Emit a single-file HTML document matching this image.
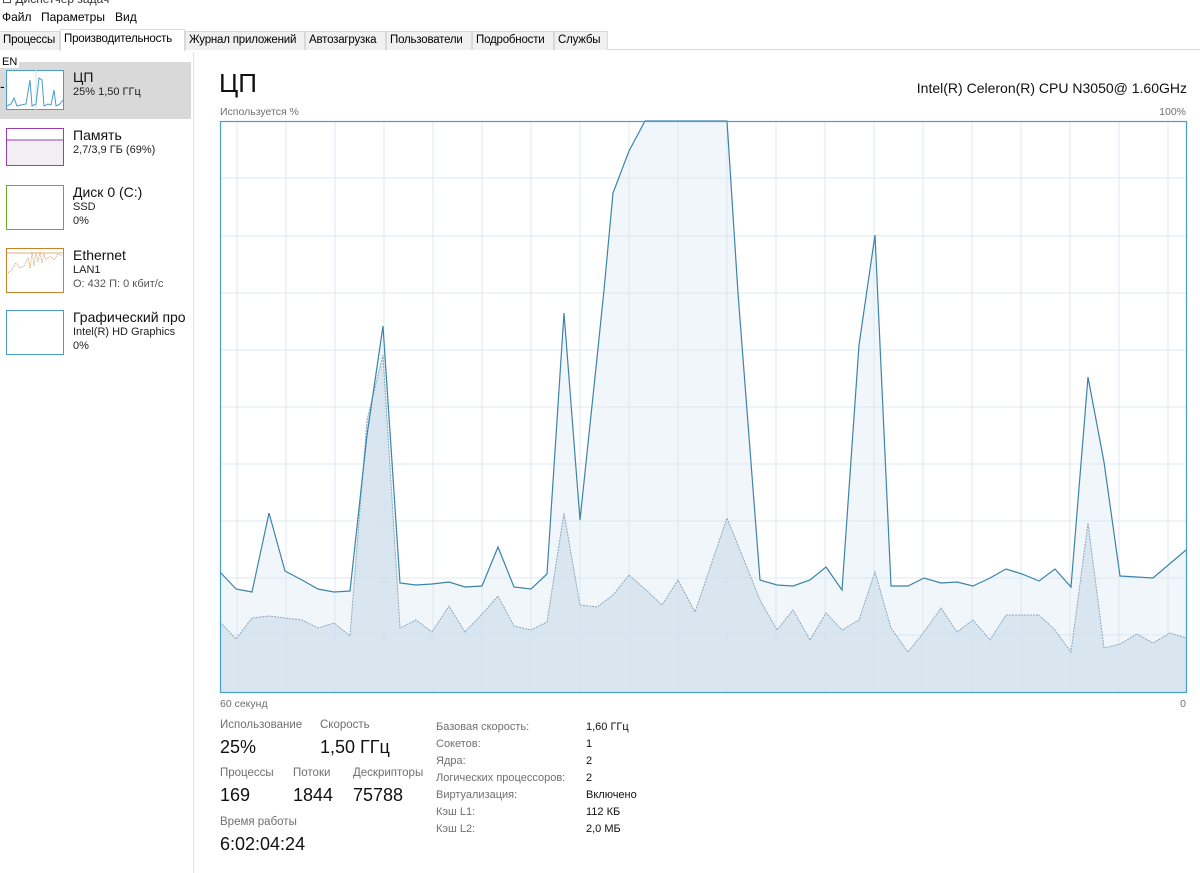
<!DOCTYPE html>
<html><head><meta charset="utf-8">
<style>
*{margin:0;padding:0;box-sizing:border-box}
body{width:1200px;height:873px;overflow:hidden;background:#fff;font-family:"Liberation Sans","Noto Sans CJK SC",sans-serif;color:#000;position:relative}
.a{position:absolute;white-space:nowrap}
.menu{font-size:12px;top:10px}
.tabs{position:absolute;top:29px;left:0;height:21px;width:1200px;border-bottom:1px solid #d9d9d9}
.tab{position:absolute;top:2px;height:19px;font-size:11.5px;letter-spacing:-0.2px;padding:2px 3px 0;border:1px solid #d9d9d9;border-bottom:none;background:#f0f0f0;white-space:nowrap;overflow:hidden}
.tab.sel{top:0;height:22px;background:#fff;padding-top:3px}
.side .t1{font-size:14px;color:#111}
.side .t2{font-size:11px;color:#222}
.lbl{font-size:11px;color:#707070}
.big{font-size:18px;color:#111}
.kv{font-size:11px;color:#707070}
.vv{font-size:11px;color:#111}
</style></head><body>
<div class="a" style="top:-8px;left:2px;font-size:12px;color:#333">⊟ Диспетчер задач</div>
<div class="a menu" style="left:2px">Файл</div>
<div class="a menu" style="left:41px">Параметры</div>
<div class="a menu" style="left:115px">Вид</div>
<div class="tabs">
<div class="tab" style="left:-1px;width:61px">Процессы</div>
<div class="tab sel" style="left:60px;width:125px">Производительность</div>
<div class="tab" style="left:185px;width:120px">Журнал приложений</div>
<div class="tab" style="left:305px;width:81px">Автозагрузка</div>
<div class="tab" style="left:386px;width:86px">Пользователи</div>
<div class="tab" style="left:472px;width:82px">Подробности</div>
<div class="tab" style="left:554px;width:54px">Службы</div>
</div>
<div class="a" style="left:193px;top:52px;width:1px;height:821px;background:#e3e3e3"></div>
<!-- sidebar -->
<div class="a" style="left:0;top:62px;width:191px;height:57px;background:#d9d9d9"></div>
<div class="a" style="left:0;top:56px;font-size:11px;background:#fff;padding:0 2px">EN</div>
<div class="a" style="left:0;top:78px;font-size:14px">-</div>
<svg class="a" style="left:6px;top:70px" width="58" height="40"><rect x="0.5" y="0.5" width="57" height="39" fill="#fff" stroke="#4a9cc9"/><line x1="30" y1="0" x2="30" y2="40" stroke="#cfe3ef"/><polyline fill="none" stroke="#4a9cc9" stroke-width="1" points="1,36 5,34 8,28 11,36 15,35 20,34 24,10 26,36 30,34 33,8 36,10 38,36 42,34 45,35 48,20 50,36 54,34 57,30"/></svg>
<div class="a side" style="left:73px;top:69px"><div class="t1">ЦП</div><div class="t2" style="margin-top:1px">25% 1,50 ГГц</div></div>

<svg class="a" style="left:6px;top:128px" width="58" height="38"><rect x="0.5" y="0.5" width="57" height="37" fill="#fff" stroke="#9b3eb3"/><rect x="1" y="12" width="56" height="25" fill="#f1eff3"/><line x1="1" y1="12" x2="57" y2="12" stroke="#9b3eb3"/></svg>
<div class="a side" style="left:73px;top:127px"><div class="t1">Память</div><div class="t2" style="margin-top:1px">2,7/3,9 ГБ (69%)</div></div>

<svg class="a" style="left:6px;top:185px" width="58" height="45"><rect x="0.5" y="0.5" width="57" height="44" fill="#fff" stroke="#6aad2c"/></svg>
<div class="a side" style="left:73px;top:184px"><div class="t1">Диск 0 (C:)</div><div class="t2" style="margin-top:1px">SSD</div><div class="t2" style="margin-top:2px">0%</div></div>

<svg class="a" style="left:6px;top:248px" width="58" height="45"><rect x="0.5" y="0.5" width="57" height="44" fill="#fff" stroke="#c8822c"/><line x1="1" y1="5" x2="57" y2="5" stroke="#e0b07a"/><polyline fill="none" stroke="#d09050" stroke-width="0.8" stroke-dasharray="1,1" points="2,25 6,22 10,15 14,20 18,18 22,10 24,20 26,4 28,18 30,4 32,14 34,4 36,15 38,6 40,12 44,8 48,12 52,6 56,8"/></svg>
<div class="a side" style="left:73px;top:247px"><div class="t1">Ethernet</div><div class="t2" style="margin-top:1px">LAN1</div><div class="t2" style="margin-top:2px;color:#555">О: 432 П: 0 кбит/с</div></div>

<svg class="a" style="left:6px;top:310px" width="58" height="45"><rect x="0.5" y="0.5" width="57" height="44" fill="#fff" stroke="#4a9cc9"/></svg>
<div class="a side" style="left:73px;top:309px"><div class="t1">Графический про</div><div class="t2" style="margin-top:1px">Intel(R) HD Graphics</div><div class="t2" style="margin-top:2px">0%</div></div>

<!-- main -->
<div class="a" style="left:219px;top:68px;font-size:26px;color:#111">ЦП</div>
<div class="a" style="right:13px;top:80px;font-size:14px;color:#111">Intel(R) Celeron(R) CPU N3050@ 1.60GHz</div>
<div class="a lbl" style="left:220px;top:106px;font-size:10.5px">Используется %</div>
<div class="a lbl" style="right:14px;top:106px;font-size:10.5px">100%</div>
<svg class="a" style="left:0;top:0" width="1200" height="873">
<polygon fill="#f1f6fb" points="220,692 220,572 236,589 252,592 269,513 285,571 302,580 318,589 334,592 350,591 367,435 383,326 400,583 416,585 432,584 449,582 465,587 482,586 498,547 514,587 531,589 547,574 564,313 580,520 597,358 604,290 613,193 629,151 645,121 727,121 738,293 760,580 777,585 793,586 810,580 826,567 842,590 859,345 875,235 891,586 908,586 924,578 941,583 957,582 973,586 990,578 1006,569 1022,574 1039,581 1055,569 1071,587 1088,377 1104,462 1120,576 1137,577 1153,578 1186,550 1186,692"/>
<polygon fill="#d9e6f0" points="220,692 220,622 236,639 252,618 269,616 285,618 302,620 318,628 334,623 350,636 367,420 383,355 400,628 416,620 432,632 449,606 465,632 482,614 498,596 514,626 531,630 547,622 564,513 580,605 597,607 613,595 629,575 646,590 662,605 678,580 695,612 727,518 744,560 760,600 777,630 793,610 810,640 826,613 842,630 859,620 875,572 891,628 908,652 924,632 941,608 957,632 973,620 990,640 1006,615 1039,615 1055,630 1071,652 1088,523 1104,648 1120,644 1137,634 1153,643 1170,633 1186,638 1186,692"/>
<g stroke="#d3e3ee" stroke-width="1" opacity="0.75">
<line x1="237" y1="121" x2="237" y2="692"/><line x1="286" y1="121" x2="286" y2="692"/><line x1="335" y1="121" x2="335" y2="692"/><line x1="384" y1="121" x2="384" y2="692"/><line x1="433" y1="121" x2="433" y2="692"/><line x1="482" y1="121" x2="482" y2="692"/><line x1="531" y1="121" x2="531" y2="692"/><line x1="580" y1="121" x2="580" y2="692"/><line x1="629" y1="121" x2="629" y2="692"/><line x1="678" y1="121" x2="678" y2="692"/><line x1="727" y1="121" x2="727" y2="692"/><line x1="776" y1="121" x2="776" y2="692"/><line x1="825" y1="121" x2="825" y2="692"/><line x1="874" y1="121" x2="874" y2="692"/><line x1="923" y1="121" x2="923" y2="692"/><line x1="972" y1="121" x2="972" y2="692"/><line x1="1021" y1="121" x2="1021" y2="692"/><line x1="1070" y1="121" x2="1070" y2="692"/><line x1="1119" y1="121" x2="1119" y2="692"/><line x1="1168" y1="121" x2="1168" y2="692"/>
<line x1="220" y1="178" x2="1186" y2="178"/><line x1="220" y1="236" x2="1186" y2="236"/><line x1="220" y1="293" x2="1186" y2="293"/><line x1="220" y1="350" x2="1186" y2="350"/><line x1="220" y1="407" x2="1186" y2="407"/><line x1="220" y1="464" x2="1186" y2="464"/><line x1="220" y1="521" x2="1186" y2="521"/><line x1="220" y1="578" x2="1186" y2="578"/><line x1="220" y1="635" x2="1186" y2="635"/>
</g>
<polyline fill="none" stroke="#8aa9c0" stroke-width="1" stroke-dasharray="2,1" points="220,622 236,639 252,618 269,616 285,618 302,620 318,628 334,623 350,636 367,420 383,355 400,628 416,620 432,632 449,606 465,632 482,614 498,596 514,626 531,630 547,622 564,513 580,605 597,607 613,595 629,575 646,590 662,605 678,580 695,612 727,518 744,560 760,600 777,630 793,610 810,640 826,613 842,630 859,620 875,572 891,628 908,652 924,632 941,608 957,632 973,620 990,640 1006,615 1039,615 1055,630 1071,652 1088,523 1104,648 1120,644 1137,634 1153,643 1170,633 1186,638"/>
<polyline fill="none" stroke="#3c84a8" stroke-width="1.2" points="220,572 236,589 252,592 269,513 285,571 302,580 318,589 334,592 350,591 367,435 383,326 400,583 416,585 432,584 449,582 465,587 482,586 498,547 514,587 531,589 547,574 564,313 580,520 597,358 604,290 613,193 629,151 645,121 727,121 738,293 760,580 777,585 793,586 810,580 826,567 842,590 859,345 875,235 891,586 908,586 924,578 941,583 957,582 973,586 990,578 1006,569 1022,574 1039,581 1055,569 1071,587 1088,377 1104,462 1120,576 1137,577 1153,578 1186,550"/>
<rect x="220.5" y="121.5" width="966" height="571" fill="none" stroke="#4a9cc9" stroke-width="1.2"/>
</svg>
<div class="a lbl" style="left:220px;top:698px;font-size:10.5px">60 секунд</div>
<div class="a lbl" style="right:14px;top:698px;font-size:10.5px">0</div>

<div class="a lbl" style="left:220px;top:719px;font-size:11.5px">Использование</div>
<div class="a lbl" style="left:320px;top:719px;font-size:11.5px">Скорость</div>
<div class="a big" style="left:220px;top:737px">25%</div>
<div class="a big" style="left:320px;top:737px">1,50 ГГц</div>
<div class="a lbl" style="left:220px;top:767px;font-size:11.5px">Процессы</div>
<div class="a lbl" style="left:293px;top:767px;font-size:11.5px">Потоки</div>
<div class="a lbl" style="left:353px;top:767px;font-size:11.5px">Дескрипторы</div>
<div class="a big" style="left:220px;top:785px">169</div>
<div class="a big" style="left:293px;top:785px">1844</div>
<div class="a big" style="left:353px;top:785px">75788</div>
<div class="a lbl" style="left:220px;top:816px;font-size:11.5px">Время работы</div>
<div class="a big" style="left:220px;top:834px">6:02:04:24</div>

<div class="a kv" style="left:436px;top:719px;line-height:17px">Базовая скорость:<br>Сокетов:<br>Ядра:<br>Логических процессоров:<br>Виртуализация:<br>Кэш L1:<br>Кэш L2:</div>
<div class="a vv" style="left:586px;top:719px;line-height:17px">1,60 ГГц<br>1<br>2<br>2<br>Включено<br>112 КБ<br>2,0 МБ</div>
</body></html>
